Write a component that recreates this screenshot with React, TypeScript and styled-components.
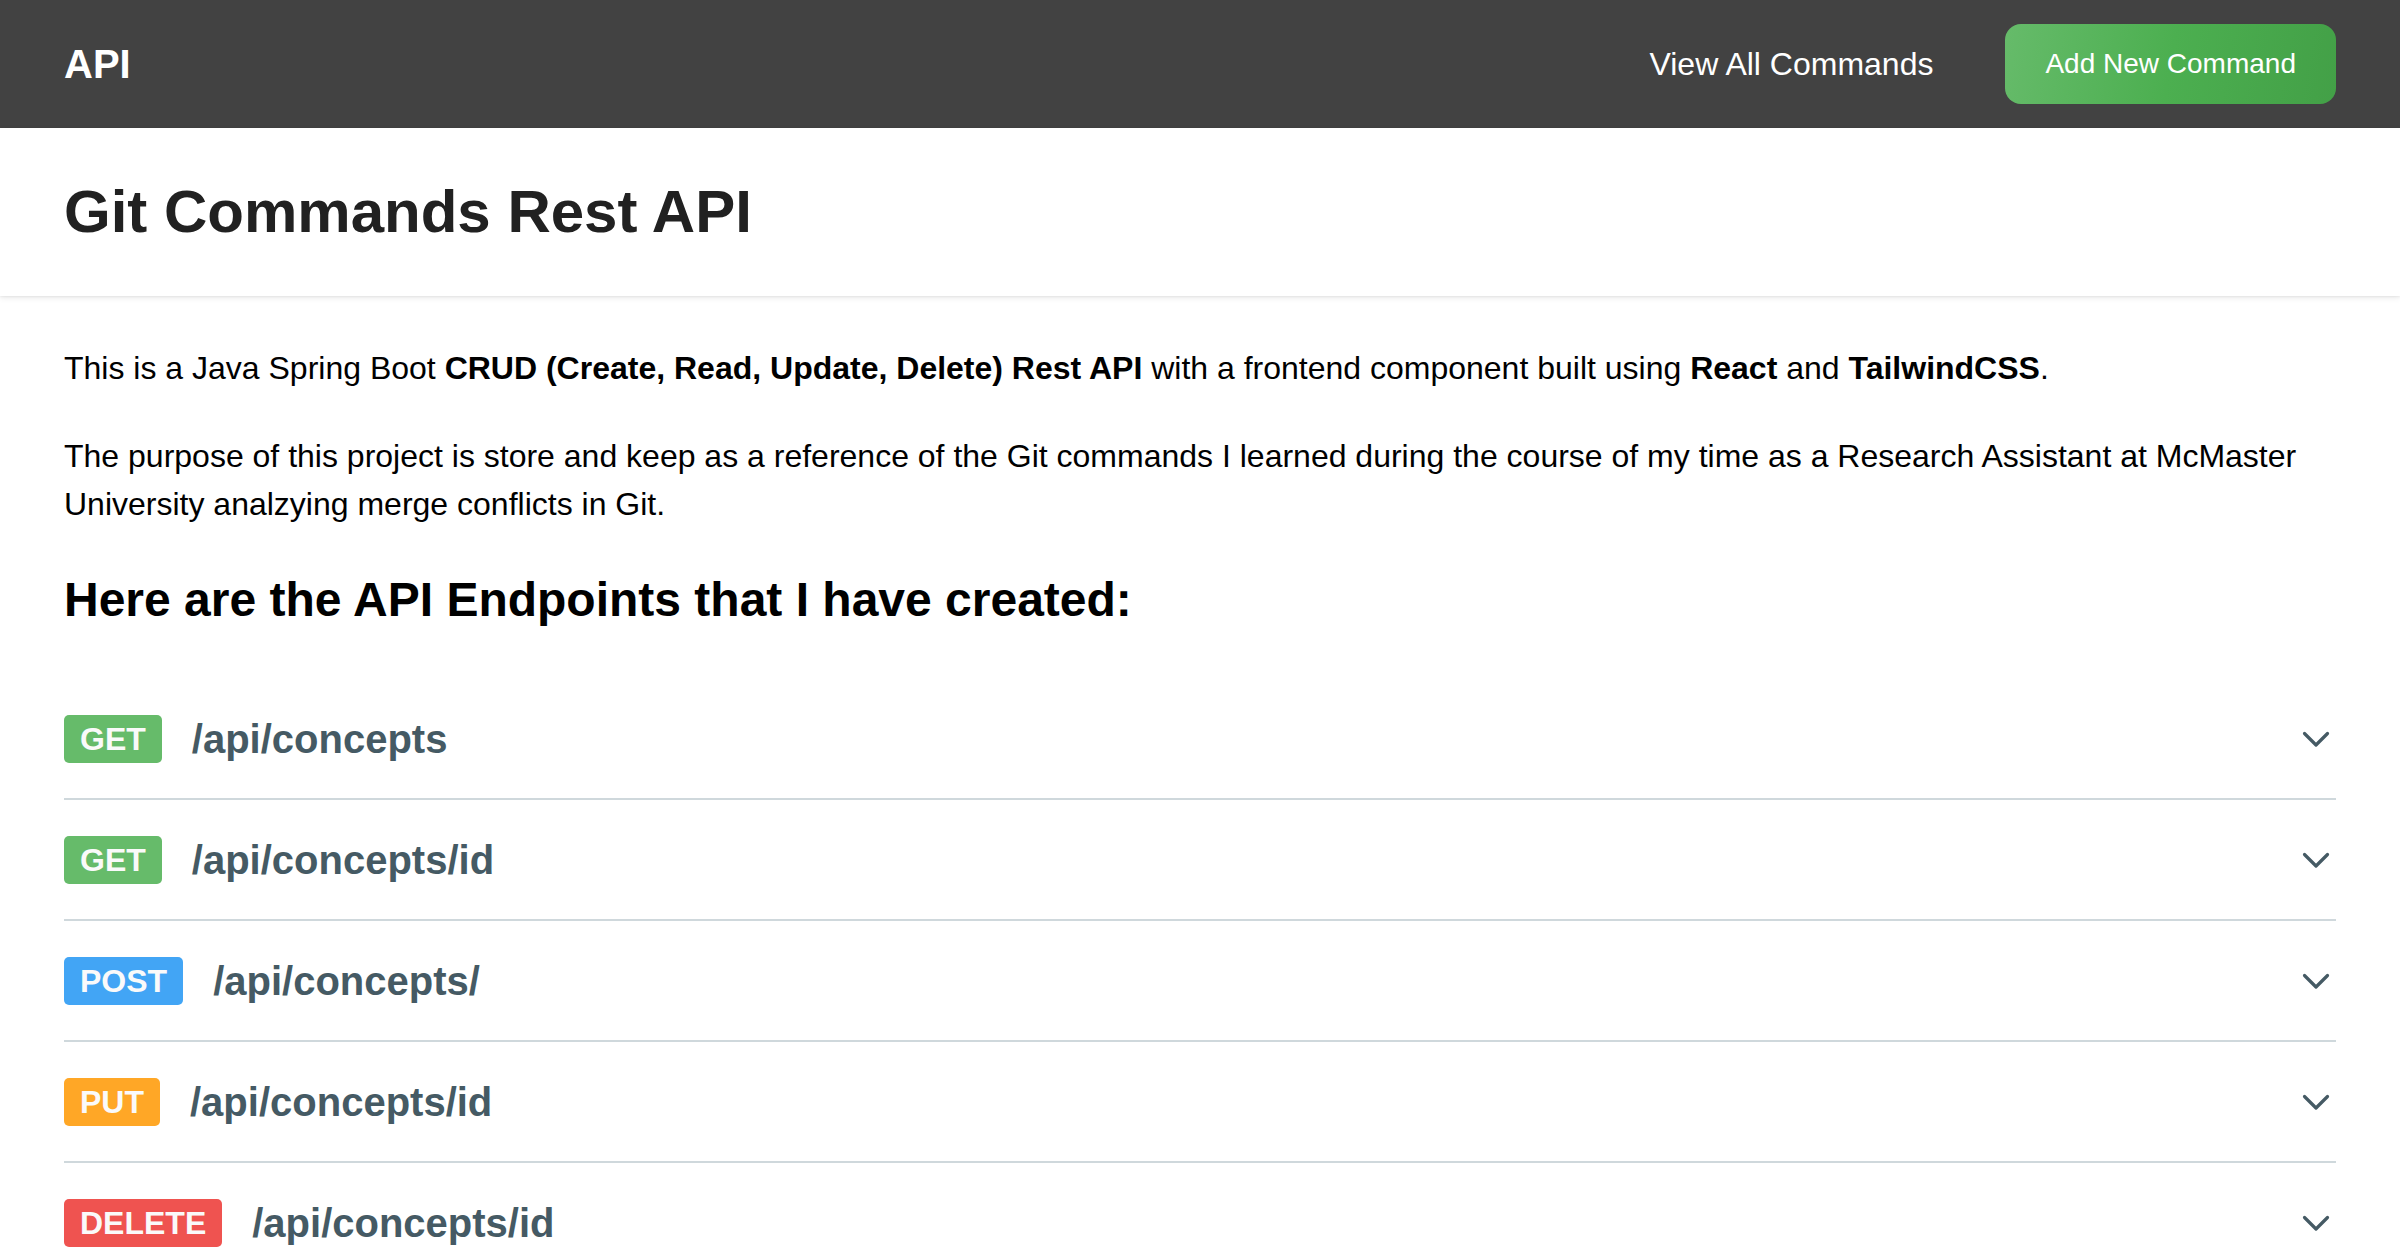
import React from "react";
import styled, { createGlobalStyle } from "styled-components";

const GlobalStyle = createGlobalStyle`
  html, body {
    margin: 0;
    padding: 0;
    background: #ffffff;
    font-family: "Liberation Sans", Arial, Helvetica, sans-serif;
    -webkit-font-smoothing: antialiased;
  }
  * { box-sizing: border-box; }
`;

const Page = styled.div`
  min-height: 100vh;
  background: #ffffff;
`;

const NavBar = styled.header`
  height: 128px;
  background: #424242;
  padding: 0 64px;
  display: flex;
  align-items: center;
  justify-content: space-between;
`;

const Brand = styled.a`
  color: #ffffff;
  font-size: 40px;
  font-weight: 700;
  line-height: 56px;
  text-decoration: none;
`;

const NavActions = styled.nav`
  display: flex;
  align-items: center;
  gap: 72px;
`;

const NavLink = styled.a`
  color: #ffffff;
  font-size: 32px;
  line-height: 48px;
  text-decoration: none;
`;

const AddButton = styled.button`
  height: 80px;
  padding: 0 40px;
  border: none;
  border-radius: 16px;
  background: linear-gradient(100deg, #66bb6a 0%, #4caf50 50%, #43a047 100%);
  color: #ffffff;
  font-family: inherit;
  font-size: 28px;
  line-height: 40px;
  cursor: pointer;
`;

const TitleBar = styled.section`
  position: relative;
  z-index: 1;
  background: #ffffff;
  padding: 48px 64px;
  box-shadow: 0 2px 6px rgba(0, 0, 0, 0.08), 0 1px 2px rgba(0, 0, 0, 0.06);
`;

const Title = styled.h1`
  margin: 0;
  font-size: 60px;
  line-height: 72px;
  font-weight: 700;
  color: #212121;
`;

const Content = styled.main`
  padding: 48px 64px 0;
`;

const Paragraph = styled.p`
  margin: 0 0 40px;
  font-size: 32px;
  line-height: 48px;
  color: #000000;
`;

const SectionHeading = styled.h2`
  margin: 0 0 47px;
  font-size: 48px;
  line-height: 64px;
  font-weight: 700;
  color: #000000;
`;

const EndpointList = styled.ul`
  list-style: none;
  margin: 0;
  padding: 0;
`;

const EndpointRow = styled.li`
  height: 121px;
  display: flex;
  align-items: center;
  border-bottom: 2px solid #cfd8dc;
`;

const MethodBadge = styled.span<{ $color: string }>`
  display: inline-flex;
  align-items: center;
  height: 48px;
  padding: 0 16px;
  border-radius: 5px;
  background: ${(p) => p.$color};
  color: #fafafa;
  font-size: 32px;
  font-weight: 700;
  line-height: 48px;
`;

const EndpointPath = styled.span`
  margin-left: 30px;
  font-size: 40px;
  font-weight: 700;
  line-height: 56px;
  color: #455a64;
`;

const Chevron = styled.svg`
  margin-left: auto;
  width: 40px;
  height: 40px;
  flex-shrink: 0;
`;

const ChevronDown = () => (
  <Chevron viewBox="0 0 40 40" fill="none">
    <path
      d="M8.5 14.5 L20 26 L31.5 14.5"
      stroke="#455a64"
      strokeWidth="3.2"
      strokeLinecap="round"
      strokeLinejoin="round"
    />
  </Chevron>
);

const METHOD_COLORS: Record<string, string> = {
  GET: "#66bb6a",
  POST: "#42a5f5",
  PUT: "#ffa726",
  DELETE: "#ef5350",
};

const endpoints = [
  { method: "GET", path: "/api/concepts" },
  { method: "GET", path: "/api/concepts/id" },
  { method: "POST", path: "/api/concepts/" },
  { method: "PUT", path: "/api/concepts/id" },
  { method: "DELETE", path: "/api/concepts/id" },
];

export default function App() {
  return (
    <Page>
      <GlobalStyle />
      <NavBar>
        <Brand href="#">API</Brand>
        <NavActions>
          <NavLink href="#">View All Commands</NavLink>
          <AddButton>Add New Command</AddButton>
        </NavActions>
      </NavBar>
      <TitleBar>
        <Title>Git Commands Rest API</Title>
      </TitleBar>
      <Content>
        <Paragraph>
          This is a Java Spring Boot <b>CRUD (Create, Read, Update, Delete) Rest API</b> with a
          frontend component built using <b>React</b> and <b>TailwindCSS</b>.
        </Paragraph>
        <Paragraph>
          The purpose of this project is store and keep as a reference of the Git commands I
          learned during the course of my time as a Research Assistant at McMaster University
          analzying merge conflicts in Git.
        </Paragraph>
        <SectionHeading>Here are the API Endpoints that I have created:</SectionHeading>
        <EndpointList>
          {endpoints.map((e, i) => (
            <EndpointRow key={i}>
              <MethodBadge $color={METHOD_COLORS[e.method]}>{e.method}</MethodBadge>
              <EndpointPath>{e.path}</EndpointPath>
              <ChevronDown />
            </EndpointRow>
          ))}
        </EndpointList>
      </Content>
    </Page>
  );
}
